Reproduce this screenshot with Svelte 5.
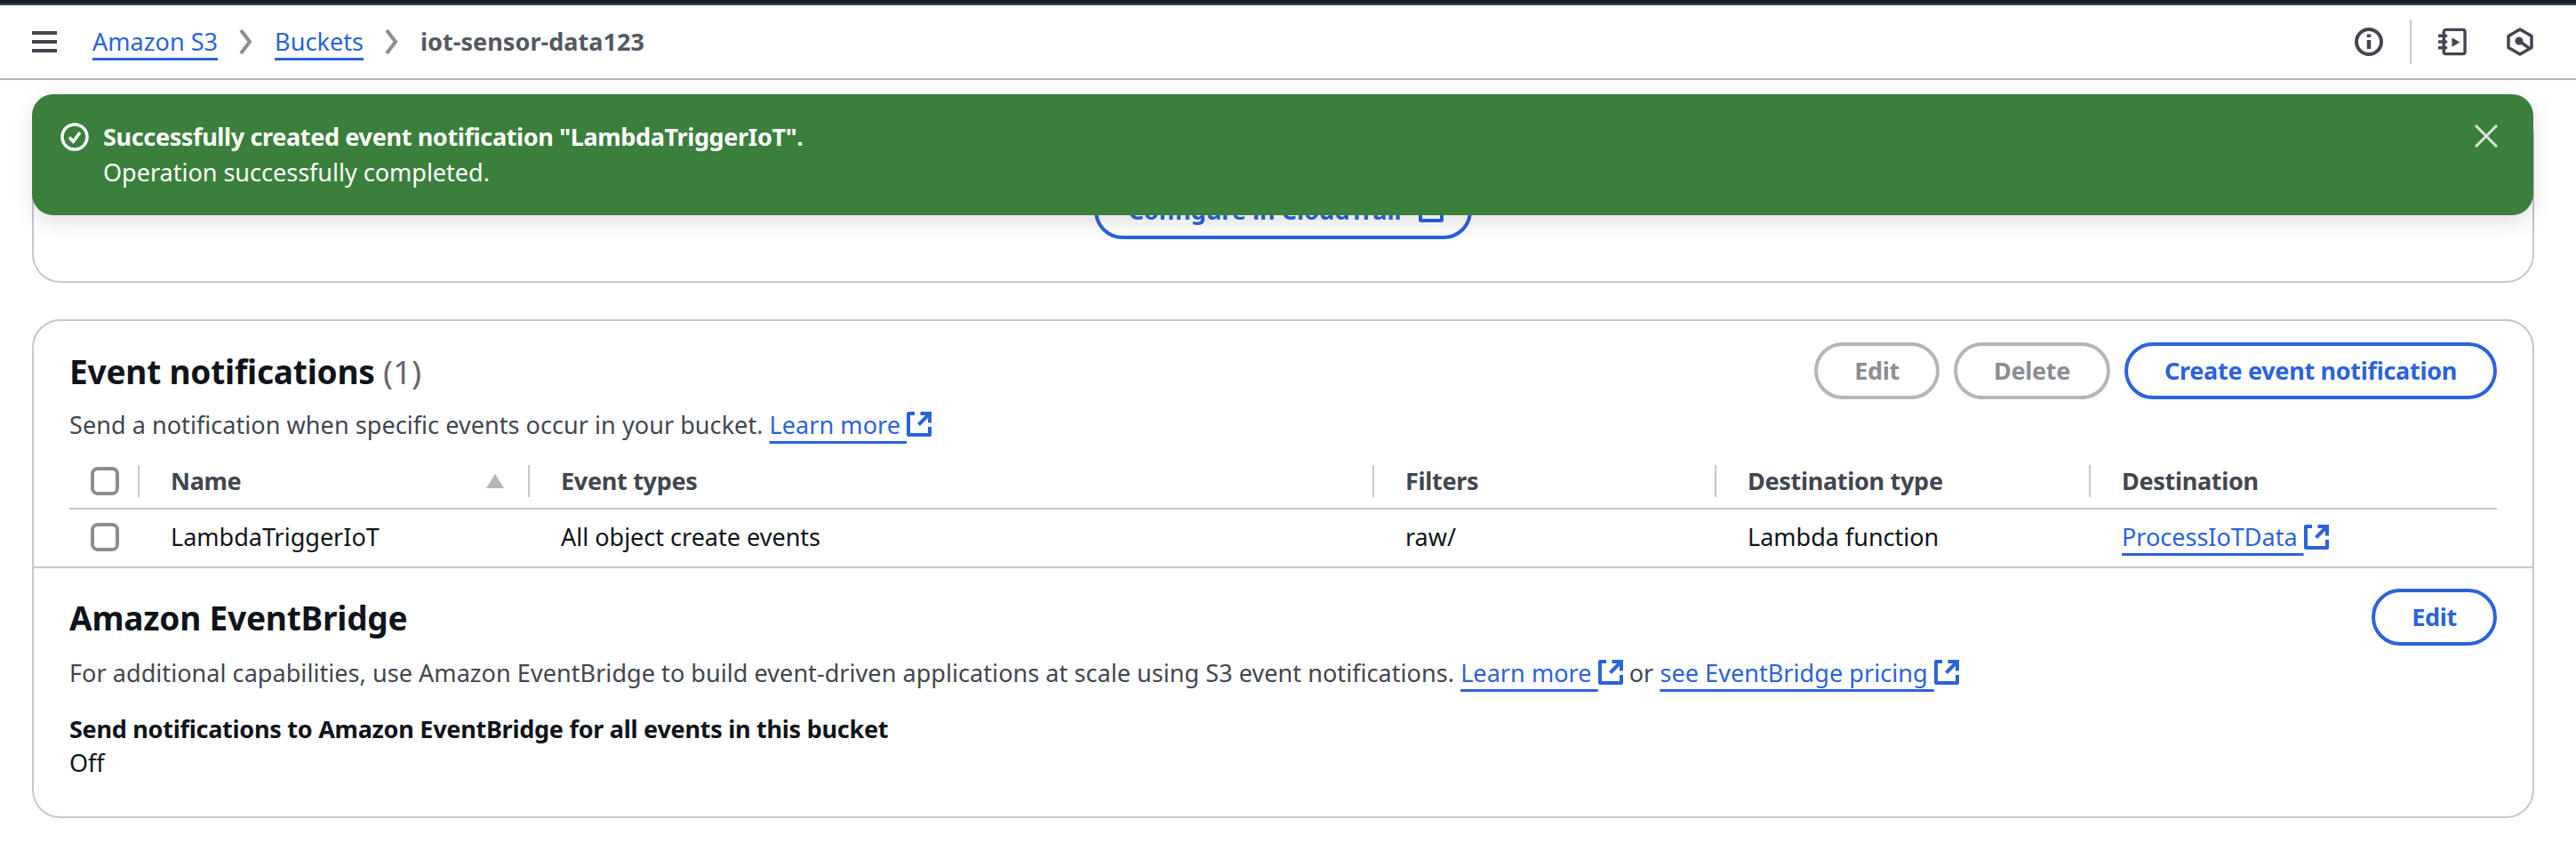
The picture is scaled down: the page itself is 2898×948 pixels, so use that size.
<script lang="ts">
  const columns = [
    { key: 'name', label: 'Name', sorted: true },
    { key: 'types', label: 'Event types' },
    { key: 'filters', label: 'Filters' },
    { key: 'desttype', label: 'Destination type' },
    { key: 'dest', label: 'Destination' },
  ]
</script>

{#snippet ext()}
  <svg class="ext" viewBox="0 0 28 28" fill="none" stroke="currentColor" stroke-width="4" stroke-linejoin="round" aria-hidden="true">
    <path d="M9 2H2v24h24v-9" />
    <path d="M15.500 2H26v10.500" stroke-linejoin="miter" />
    <path d="M25 3 13.500 14.500" />
  </svg>
{/snippet}

<div class="page">
  <div class="topbar"></div>
  <header class="head">
    <button class="burger" aria-label="Menu"><span></span><span></span><span></span></button>
    <nav class="crumbs">
      <a href="#s3">Amazon S3</a>
      <svg class="chev" viewBox="0 0 16 32" fill="none" stroke="#8c8c94" stroke-width="4"><path d="M2 3l10 13L2 29" /></svg>
      <a href="#buckets">Buckets</a>
      <svg class="chev" viewBox="0 0 16 32" fill="none" stroke="#8c8c94" stroke-width="4"><path d="M2 3l10 13L2 29" /></svg>
      <span class="here">iot-sensor-data123</span>
    </nav>
    <div class="tools">
      <svg class="tool" viewBox="0 0 32 32" fill="none" stroke="#424650" stroke-width="4">
        <circle cx="16" cy="16" r="14" />
        <path d="M16 14v10M16 7.500v3.500" stroke-width="4.500" />
      </svg>
      <div class="vline"></div>
      <svg class="tool" viewBox="0 0 33 32" fill="none" stroke="#424650" stroke-width="3.500">
        <rect x="6.500" y="2" width="24.500" height="28" rx="2.500" />
        <path d="M1 9h8M1 16h8M1 23h8" stroke-linecap="round" />
        <path d="M16 11v11l9-5.500z" fill="#424650" stroke="none" />
      </svg>
      <svg class="tool last" viewBox="0 0 32 32" fill="none" stroke="#424650" stroke-width="3.500">
        <path d="M16 2 29 9.500v13L16 30 3 22.500v-13z" stroke-linejoin="round" />
        <circle cx="15" cy="15" r="4.500" fill="#424650" stroke="none" />
        <path d="M15 15l11 8" />
      </svg>
    </div>
  </header>

  <main class="main">
    <div class="flash" role="status">
      <svg class="ok" viewBox="0 0 32 32" fill="none" stroke="#fff" stroke-width="3.500">
        <circle cx="16" cy="16" r="14" />
        <path d="M10 16.500l4.500 4.500L22 11" />
      </svg>
      <div class="flash-text">
        <div class="flash-title">Successfully created event notification "LambdaTriggerIoT".</div>
        <div>Operation successfully completed.</div>
      </div>
      <svg class="close" viewBox="0 0 26 26" fill="none" stroke="#e2e2e2" stroke-width="3"><path d="M1 1l24 24M25 1 1 25" /></svg>
    </div>

    <section class="card first">
      <button class="btn primary config">Configure in CloudTrail {@render ext()}</button>
    </section>

    <section class="card second">
      <div class="events">
        <div class="card-head top">
          <div>
            <h2>Event notifications <span class="count">(1)</span></h2>
            <p class="desc">Send a notification when specific events occur in your bucket. <a href="#learn">Learn more&nbsp;</a>{@render ext()}</p>
          </div>
          <div class="actions">
            <button class="btn off">Edit</button>
            <button class="btn off">Delete</button>
            <button class="btn primary">Create event notification</button>
          </div>
        </div>

        <div class="table">
          <div class="row header">
            <div class="cell check"><span class="box"></span></div>
            {#each columns as col}
              <div class="cell {col.key}">
                <span>{col.label}</span>
                {#if col.sorted}<svg class="sort" viewBox="0 0 22 16"><path d="M11 0l10 16H1z" fill="#b4b4bb" /></svg>{/if}
              </div>
            {/each}
          </div>
          <div class="row body">
            <div class="cell check"><span class="box"></span></div>
            <div class="cell">LambdaTriggerIoT</div>
            <div class="cell">All object create events</div>
            <div class="cell">raw/</div>
            <div class="cell">Lambda function</div>
            <div class="cell"><a href="#fn">ProcessIoTData&nbsp;</a>{@render ext()}</div>
          </div>
        </div>
      </div>

      <div class="bridge">
        <div class="card-head low">
          <div>
            <h2>Amazon EventBridge</h2>
            <p class="desc">For additional capabilities, use Amazon EventBridge to build event-driven applications at scale using S3 event notifications. <a href="#learn2">Learn more&nbsp;</a>{@render ext()} or <a href="#pricing">see EventBridge pricing&nbsp;</a>{@render ext()}</p>
          </div>
          <button class="btn primary">Edit</button>
        </div>
        <div class="label">Send notifications to Amazon EventBridge for all events in this bucket</div>
        <div class="value">Off</div>
      </div>
    </section>
  </main>
</div>

<style>
  :global(body) {
    margin: 0;
    background: #fff;
  }
  .page {
    width: 2898px;
    height: 948px;
    overflow: hidden;
    background: #fff;
    color: #0f141a;
    font-family: 'Noto Sans', 'Open Sans', sans-serif;
    font-size: 27px;
    line-height: 40px;
  }
  a {
    color: #2b63d9;
    text-decoration: underline;
    text-decoration-thickness: 2.500px;
    text-underline-offset: 8px;
  }
  .topbar {
    height: 4px;
    background: #161d26;
    border-bottom: 2px solid #424650;
  }
  .head {
    height: 82px;
    display: flex;
    align-items: center;
    padding: 0 47px 0 36px;
    border-bottom: 2px solid #b4b4bb;
  }
  .burger {
    width: 28px;
    display: flex;
    flex-direction: column;
    gap: 6px;
    padding: 0;
    border: 0;
    background: none;
    margin-right: 40px;
  }
  .burger span {
    height: 4px;
    background: #424650;
  }
  .crumbs {
    display: flex;
    align-items: center;
    letter-spacing: 0.05px;
  }
  .chev {
    width: 16px;
    height: 32px;
    margin: 0 24px;
  }
  .here {
    font-weight: 700;
    color: #545862;
  }
  .tools {
    margin-left: auto;
    display: flex;
    align-items: center;
  }
  .tool {
    width: 32px;
    height: 32px;
    display: block;
  }
  .tool.last {
    margin-left: 44px;
  }
  .vline {
    width: 2px;
    height: 50px;
    background: #c6c6cd;
    margin: 0 30px;
  }
  .main {
    position: relative;
    padding: 30px 47px 0 36px;
  }
  .flash {
    position: absolute;
    top: 16px;
    left: 36px;
    right: 48px;
    height: 136px;
    z-index: 5;
    box-sizing: border-box;
    display: flex;
    padding: 28px 40px 0 32px;
    background: #3a7f3c;
    color: #fff;
    border-radius: 24px;
    box-shadow: 0 8px 24px rgba(0, 7, 22, 0.12);
  }
  .ok {
    width: 32px;
    height: 32px;
    margin: 4px 16px 0 0;
    flex: none;
  }
  .flash-text {
    flex: 1;
  }
  .flash-title {
    font-weight: 700;
    letter-spacing: -0.35px;
  }
  .close {
    width: 26px;
    height: 26px;
    margin-top: 6px;
  }
  .card {
    border: 2px solid #c6c6cd;
    border-radius: 32px;
    box-sizing: border-box;
  }
  .first {
    height: 198px;
    display: flex;
    justify-content: center;
    align-items: flex-end;
    padding-bottom: 47px;
  }
  .second {
    margin-top: 41px;
    height: 561px;
  }
  .events {
    padding: 24px 40px 0;
    height: 278px;
    box-sizing: border-box;
    border-bottom: 2px solid #c6c6cd;
  }
  .card-head {
    display: flex;
    justify-content: space-between;
    align-items: flex-start;
    gap: 20px;
  }
  .card-head.top {
    height: 138px;
  }
  h2 {
    margin: 9px 0 0;
    font-size: 37px;
    line-height: 48px;
    font-weight: 700;
    letter-spacing: -0.2px;
  }
  .count {
    font-weight: 400;
    color: #656871;
  }
  .desc {
    margin: 16px 0 0;
    color: #424650;
    letter-spacing: 0.06px;
  }
  .ext {
    width: 28px;
    height: 28px;
    vertical-align: -3px;
    color: #2b63d9;
  }
  .actions {
    display: flex;
    gap: 16px;
  }
  .btn {
    height: 64px;
    padding: 0 41px;
    box-sizing: border-box;
    border-radius: 40px;
    border: 4px solid;
    background: #fff;
    font: 700 27px/40px 'Noto Sans', 'Open Sans', sans-serif;
    letter-spacing: -0.3px;
    white-space: nowrap;
  }
  .btn.primary {
    border-color: #2b63d9;
    color: #2b63d9;
  }
  .btn.off {
    border-color: #b4b4bb;
    color: #8c8c94;
  }
  .btn.config {
    padding: 0 28px 0 34px;
    letter-spacing: 0;
  }
  .btn.config .ext {
    margin-left: 12px;
  }
  .row {
    display: grid;
    grid-template-columns: 79px 439px 950px 385px 421px 1fr;
  }
  .row.header {
    height: 48px;
    border-bottom: 2px solid #c6c6cd;
    color: #424650;
    font-weight: 700;
    letter-spacing: -0.3px;
    align-items: start;
  }
  .row.body {
    height: 64px;
    box-sizing: border-box;
    padding-bottom: 2px;
    align-items: center;
  }
  .cell {
    position: relative;
    padding-left: 35px;
    display: flex;
    align-items: center;
    white-space: pre;
  }
  .header .cell {
    height: 36px;
  }
  .header .cell::after {
    content: '';
    position: absolute;
    right: 0;
    top: 0;
    bottom: 0;
    width: 2px;
    background: #c6c6cd;
  }
  .header .cell:last-child::after {
    display: none;
  }
  .cell.check {
    padding-left: 24px;
  }
  .box {
    width: 32px;
    height: 32px;
    box-sizing: border-box;
    border: 4px solid #8c8c94;
    border-radius: 8px;
  }
  .sort {
    position: absolute;
    right: 28px;
    top: 10px;
    width: 22px;
    height: 16px;
  }
  .bridge {
    padding: 23px 40px 0;
  }
  .card-head.low .desc {
    margin-top: 18px;
  }
  .label {
    margin-top: 23px;
    font-weight: 700;
    letter-spacing: -0.26px;
  }
  .value {
    margin-top: -2px;
  }
</style>
